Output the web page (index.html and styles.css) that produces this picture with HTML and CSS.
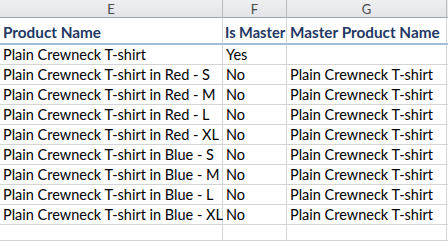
FILE: index.html
```html
<!DOCTYPE html>
<html>
<head>
<meta charset="utf-8">
<link rel="stylesheet" href="styles.css">
</head>
<body>
<div class="sheet">
  <div class="ch">E</div><div class="ch">F</div><div class="ch">G</div><div class="ch last"></div>

  <div class="c title">Product Name</div><div class="c title tight">Is Master</div><div class="c title">Master Product Name</div><div class="c title last"></div>

  <div class="c">Plain Crewneck T-shirt</div><div class="c">Yes</div><div class="c"></div><div class="c last"></div>
  <div class="c">Plain Crewneck T-shirt in Red - S</div><div class="c">No</div><div class="c">Plain Crewneck T-shirt</div><div class="c last"></div>
  <div class="c">Plain Crewneck T-shirt in Red - M</div><div class="c">No</div><div class="c">Plain Crewneck T-shirt</div><div class="c last"></div>
  <div class="c">Plain Crewneck T-shirt in Red - L</div><div class="c">No</div><div class="c">Plain Crewneck T-shirt</div><div class="c last"></div>
  <div class="c">Plain Crewneck T-shirt in Red - XL</div><div class="c">No</div><div class="c">Plain Crewneck T-shirt</div><div class="c last"></div>
  <div class="c">Plain Crewneck T-shirt in Blue - S</div><div class="c">No</div><div class="c">Plain Crewneck T-shirt</div><div class="c last"></div>
  <div class="c">Plain Crewneck T-shirt in Blue - M</div><div class="c">No</div><div class="c">Plain Crewneck T-shirt</div><div class="c last"></div>
  <div class="c">Plain Crewneck T-shirt in Blue - L</div><div class="c">No</div><div class="c">Plain Crewneck T-shirt</div><div class="c last"></div>
  <div class="c">Plain Crewneck T-shirt in Blue - XL</div><div class="c">No</div><div class="c">Plain Crewneck T-shirt</div><div class="c last"></div>
  <div class="c end"></div><div class="c end"></div><div class="c end"></div><div class="c end last"></div>
</div>
</body>
</html>
```

FILE: styles.css
```css
html, body {
  margin: 0;
  padding: 0;
  background: #ffffff;
  overflow: hidden;
}
.sheet {
  display: grid;
  grid-template-columns: 223px 64px 160px 1fr;
  grid-template-rows: 18px 27px repeat(9, 20px) 16px;
  font-family: Lato, "Open Sans", sans-serif;
  font-size: 14.5px;
  color: #000;
  width: 448px;
}
.ch {
  background: linear-gradient(#eeeff1, #e2e4e7);
  border-right: 1px solid #b8bcc2;
  border-bottom: 1px solid #9ea3a9;
  color: #4a4a4a;
  font-size: 13px;
  display: flex;
  align-items: center;
  justify-content: center;
  box-sizing: border-box;
}
.c {
  border-right: 1px solid #d4d4d4;
  border-bottom: 1px solid #d4d4d4;
  box-sizing: border-box;
  padding: 0 0 0 3px;
  display: flex;
  align-items: flex-end;
  padding-bottom: 1px;
  white-space: nowrap;
  overflow: visible;
  line-height: 17px;
}
.title {
  font-weight: bold;
  font-size: 15.3px;
  color: #1f3864;
  border-bottom: 2px solid #a3bcd8;
  padding-bottom: 2px;
}
.tight {
  padding-left: 2px;
  font-size: 14.6px;
}
.last {
  border-right: none;
}
```
